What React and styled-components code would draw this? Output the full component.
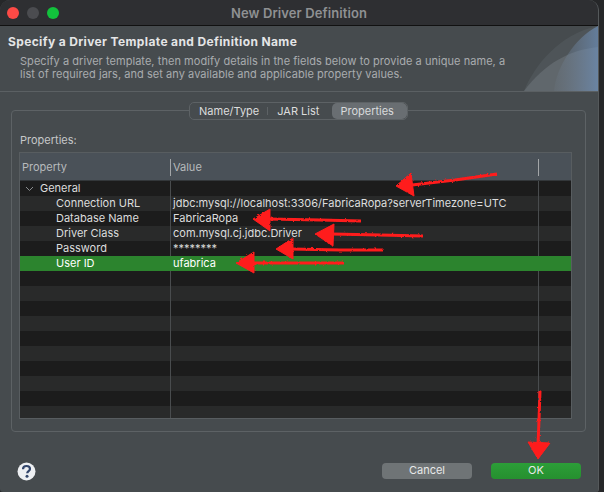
import styled, { createGlobalStyle } from "styled-components";

const GlobalStyle = createGlobalStyle`
  html, body {
    margin: 0;
    padding: 0;
    background: #262729;
    overflow: hidden;
  }
`;

const Page = styled.div`
  position: relative;
  width: 604px;
  height: 492px;
  font-family: Inter, "Liberation Sans", sans-serif;
  font-size: 11px;
`;

const Window = styled.div`
  width: 598px;
  height: 492px;
  display: flex;
  flex-direction: column;
  background: #464b4e;
  border-right: 1px solid #55595b;
  border-radius: 10px 10px 3px 3px;
  overflow: hidden;
`;

const TitleBar = styled.div`
  height: 25px;
  flex: none;
  display: flex;
  align-items: center;
  position: relative;
  padding-left: 7px;
  gap: 8px;
  background: #2e2f32;
  border-bottom: 1px solid #111;
`;

const Light = styled.span`
  width: 12px;
  height: 12px;
  border-radius: 50%;
  background: ${(p) => p.$color};
`;

const WindowTitle = styled.div`
  position: absolute;
  left: 0;
  right: 0;
  text-align: center;
  color: #8f9193;
  font-size: 13px;
  letter-spacing: 0.1px;
  font-weight: 600;
`;

const Header = styled.div`
  height: 66px;
  flex: none;
  position: relative;
  padding: 8px 8px 0;
  box-sizing: border-box;
  border-bottom: 1px solid #5b6063;
`;

const HeaderArt = styled.svg`
  position: absolute;
  right: 0;
  top: 0;
`;

const Heading = styled.div`
  color: #e4e5e6;
  font-size: 12px;
  font-weight: 700;
  letter-spacing: 0.37px;
  line-height: 15px;
`;

const Description = styled.div`
  margin: 6px 0 0 12px;
  color: #a9acae;
  font-size: 11px;
  letter-spacing: 0.05px;
  line-height: 13px;
`;

const Body = styled.div`
  flex: 1;
  display: flex;
  flex-direction: column;
  padding: 10px 12px 0 11px;
`;

const TabBar = styled.div`
  align-self: center;
  display: flex;
  align-items: center;
  box-sizing: border-box;
  height: 18px;
  margin-bottom: -10px;
  position: relative;
  z-index: 1;
  background: #464b4e;
  border: 1px solid #5d6265;
  border-radius: 5px;
`;

const Tab = styled.div`
  height: 100%;
  display: flex;
  align-items: center;
  padding: ${(p) => (p.$active ? "0 13px 0 8px" : "0 9px")};
  margin-left: ${(p) => (p.$active ? 4 : 0)}px;
  color: ${(p) => (p.$active ? "#d8dadb" : "#dcdddd")};
  background: ${(p) => (p.$active ? "#696e72" : "transparent")};
  border-radius: 5px;
  position: relative;

  ${(p) =>
    p.$divided &&
    `&::after {
      content: "";
      position: absolute;
      right: 0;
      top: 4px;
      bottom: 4px;
      width: 1px;
      background: #5d6265;
    }`}
`;

const Group = styled.div`
  height: 322px;
  box-sizing: border-box;
  padding: 22px 13px 12px 7px;
  border: 1px solid #5d6265;
  border-radius: 4px;
`;

const GroupLabel = styled.div`
  color: #c5c7c8;
  line-height: 14px;
  margin-bottom: 5px;
  margin-left: 1px;
`;

const Table = styled.div`
  height: 267px;
  box-sizing: border-box;
  display: flex;
  flex-direction: column;
  overflow: hidden;
  position: relative;
  border: 1px solid #585d60;
`;

const HeaderRow = styled.div`
  height: 27px;
  flex: none;
  display: grid;
  grid-template-columns: 151px 368px 1fr;
  align-items: center;
  background: #4a5158;
  border-bottom: 1px solid #33373a;
`;

const HeaderCell = styled.div`
  height: 17px;
  line-height: 17px;
  margin-top: 1px;
  padding-left: 2px;
  color: #b7babc;
  border-right: ${(p) => (p.$lined ? "1px solid #a3a6a8" : "0")};
`;

const Row = styled.div`
  height: 15px;
  flex: none;
  display: grid;
  grid-template-columns: 151px 368px 1fr;
  background: ${(p) =>
    p.$selected ? "#2c842e" : p.$odd ? "#292a2a" : "#1c1c1c"};
  color: ${(p) => (p.$selected ? "#fff" : "#dcdddd")};
  line-height: 15px;
`;

const Cell = styled.div`
  white-space: nowrap;
  padding-left: ${(p) => p.$indent || 2}px;
  display: flex;
  align-items: center;
  gap: 6px;
  border-right: ${(p) =>
    p.$lined ? `1px solid ${p.$selected ? "#2c842e" : "#494c4e"}` : "0"};
`;

const Footer = styled.div`
  flex: 1;
  display: flex;
  align-items: center;
  padding: 18px 5px 0 6px;
`;

const HelpIcon = styled.svg`
  display: block;
`;

const Spacer = styled.div`
  flex: 1;
`;

const Button = styled.div`
  width: 90px;
  height: 16px;
  margin-left: ${(p) => (p.$ok ? 19 : 0)}px;
  border-radius: 4px;
  text-align: center;
  line-height: 15px;
  color: #e8e9e9;
  background: ${(p) =>
    p.$ok ? "linear-gradient(#2c9e38, #26902f)" : "#6f7476"};
`;

const ArrowLayer = styled.svg`
  position: absolute;
  inset: 0;
  pointer-events: none;
`;

const rows = [
  { name: "General", group: true },
  { name: "Connection URL", value: "jdbc:mysql://localhost:3306/FabricaRopa?serverTimezone=UTC" },
  { name: "Database Name", value: "FabricaRopa" },
  { name: "Driver Class", value: "com.mysql.cj.jdbc.Driver" },
  { name: "Password", value: "********" },
  { name: "User ID", value: "ufabrica", selected: true },
  ...Array.from({ length: 10 }, () => ({ name: "" })),
];

const arrows = [
  { tail: "497,174 455,180 412,185", head: "396,186 411,173 414,196" },
  { tail: "361,221 320,220 268,219", head: "253,219 270,209 270,231" },
  { tail: "423,236 380,235 332,234", head: "315,234 334,224 333,246" },
  { tail: "383,250 340,250 291,249", head: "276,249 293,238 293,259" },
  { tail: "344,263 300,263 252,263", head: "236,263 254,252 254,273" },
  { tail: "540,391 539,420 538,445", head: "538,459 528,442 550,443" },
];

const App = () => (
  <Page>
    <GlobalStyle />
    <Window>
      <TitleBar>
        <Light $color="#fc4a46" />
        <Light $color="#4b4c50" />
        <Light $color="#12c23c" />
        <WindowTitle>New Driver Definition</WindowTitle>
      </TitleBar>
      <Header>
        <HeaderArt width="74" height="65" viewBox="0 0 74 65">
          <defs>
            <linearGradient id="artBlue" x1="0" x2="1" y1="0" y2="0">
              <stop offset="0" stopColor="#7a8a9e" stopOpacity="0.1" />
              <stop offset="1" stopColor="#6f93c0" stopOpacity="0.65" />
            </linearGradient>
          </defs>
          <path d="M0 65C10 40 35 8 74 0V65Z" fill="#828c96" fillOpacity="0.15" />
          <path d="M0 65C20 38 45 24 74 21V65Z" fill="#98a0a8" fillOpacity="0.25" />
          <path d="M30 65C32 42 50 12 74 0V65Z" fill="url(#artBlue)" />
        </HeaderArt>
        <Heading>Specify a Driver Template and Definition Name</Heading>
        <Description>
          Specify a driver template, then modify details in the fields below to provide a unique name, a
          <br />
          list of required jars, and set any available and applicable property values.
        </Description>
      </Header>
      <Body>
        <TabBar>
          <Tab $divided>Name/Type</Tab>
          <Tab>JAR List</Tab>
          <Tab $active>Properties</Tab>
        </TabBar>
        <Group>
          <GroupLabel>Properties:</GroupLabel>
          <Table>
            <HeaderRow>
              <HeaderCell $lined>Property</HeaderCell>
              <HeaderCell $lined>Value</HeaderCell>
              <HeaderCell />
            </HeaderRow>
            {rows.map((row, i) => (
              <Row key={i} $odd={i % 2 === 1} $selected={row.selected}>
                <Cell $lined $selected={row.selected} $indent={row.group ? 5 : 36}>
                  {row.group && (
                    <svg width="9" height="6" viewBox="0 0 9 6">
                      <path d="M1 1L4.5 4.5L8 1" fill="none" stroke="#8a8d8f" strokeWidth="1" />
                    </svg>
                  )}
                  {row.name}
                </Cell>
                <Cell $lined $selected={row.selected}>{row.value}</Cell>
                <Cell />
              </Row>
            ))}
          </Table>
        </Group>
        <Footer>
          <HelpIcon width="19" height="19" viewBox="0 0 19 19">
            <circle cx="9.5" cy="9.5" r="9" fill="#eef0f3" />
            <path d="M6 7.2C6 5 7.6 4 9.5 4C11.5 4 13 5.1 13 6.9C13 9 10.2 9.2 10.2 11.2" fill="none" stroke="#33466b" strokeWidth="2.2" />
            <circle cx="10" cy="14.3" r="1.5" fill="#33466b" />
          </HelpIcon>
          <Spacer />
          <Button>Cancel</Button>
          <Button $ok>OK</Button>
        </Footer>
      </Body>
    </Window>
    <ArrowLayer width="604" height="492" viewBox="0 0 604 492">
      <defs>
        <filter id="rough" x="-5%" y="-5%" width="110%" height="110%">
          <feTurbulence type="fractalNoise" baseFrequency="0.35" numOctaves="2" seed="4" />
          <feDisplacementMap in="SourceGraphic" scale="2.5" />
        </filter>
      </defs>
      <g filter="url(#rough)">
        {arrows.map((a, i) => (
          <g key={i} fill="#ff1c1c" stroke="#ff1c1c" strokeLinejoin="round">
            <polyline points={a.tail} fill="none" strokeWidth="3" />
            <polygon points={a.head} strokeWidth="1" />
          </g>
        ))}
      </g>
    </ArrowLayer>
  </Page>
);

export default App;
